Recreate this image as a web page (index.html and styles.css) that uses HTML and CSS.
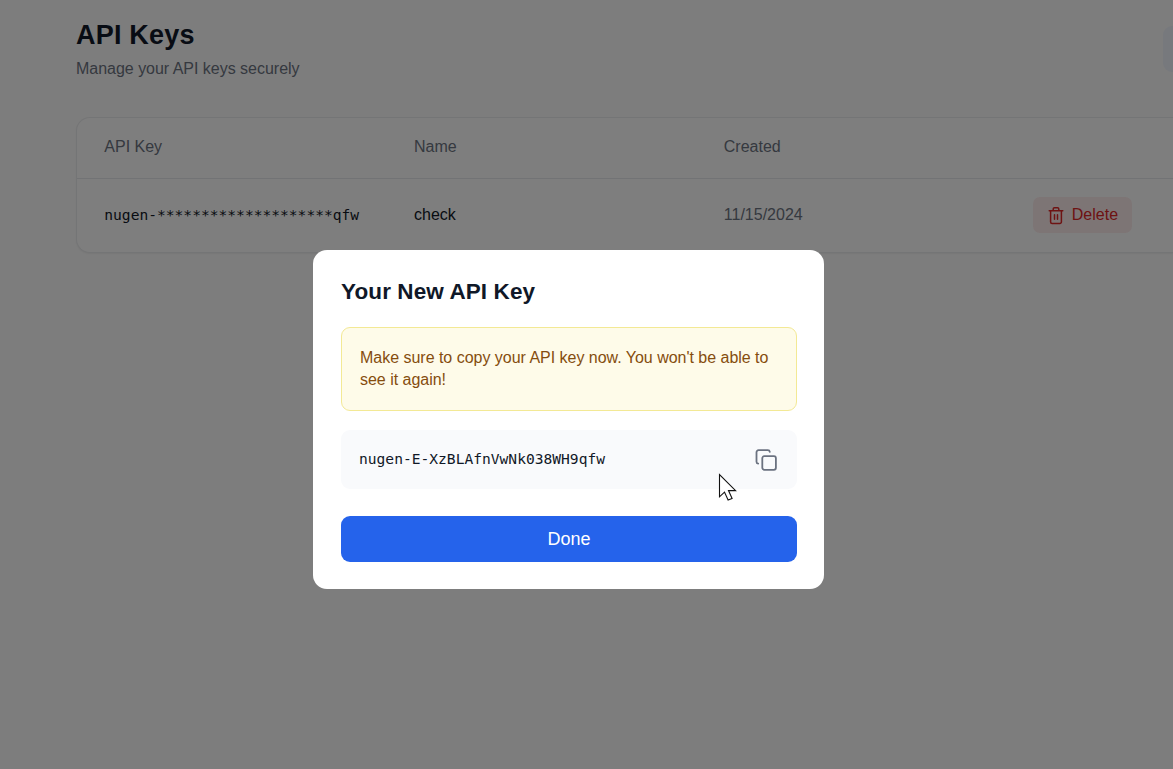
FILE: index.html
```html
<!DOCTYPE html>
<html lang="en">
<head>
<meta charset="utf-8">
<title>API Keys</title>
<link rel="stylesheet" href="styles.css">
</head>
<body>
<main class="page">
  <header class="page-header">
    <div>
      <h1 class="page-title">API Keys</h1>
      <p class="page-subtitle">Manage your API keys securely</p>
    </div>
    <div class="create-button"></div>
  </header>
  <section class="card">
    <div class="row row-head">
      <span>API Key</span><span>Name</span><span>Created</span><span></span>
    </div>
    <div class="row row-body">
      <span class="mono">nugen-********************qfw</span>
      <span class="name">check</span>
      <span class="date">11/15/2024</span>
      <button class="delete">
        <svg class="trash" viewBox="0 0 18 20" fill="none" stroke="currentColor" stroke-width="1.5" stroke-linecap="round" stroke-linejoin="round"><path d="M2.2 5.7h13.6M3.6 5.7v11.3a1.5 1.5 0 0 0 1.5 1.5h7.8a1.5 1.5 0 0 0 1.5-1.5V5.7M6.2 5.7V4.1A1.3 1.3 0 0 1 7.5 2.8h3A1.3 1.3 0 0 1 11.8 4.1v1.6M7.5 9.7v4.6M10.5 9.7v4.6"/></svg>
        <span class="delete-label">Delete</span>
      </button>
    </div>
  </section>
</main>
<div class="overlay">
  <div class="modal">
    <h2 class="modal-title">Your New API Key</h2>
    <p class="notice">Make sure to copy your API key now. You won't be able to<br>see it again!</p>
    <div class="key-box">
      <code class="mono">nugen-E-XzBLAfnVwNk038WH9qfw</code>
      <svg class="copy" viewBox="0 0 22 22" fill="none" stroke="currentColor" stroke-width="1.8" stroke-linecap="round" stroke-linejoin="round"><rect x="7.3" y="7.2" width="13.6" height="13.6" rx="2"/><path d="M3.2 14.6a2 2 0 0 1-1.7-2V3.2a2 2 0 0 1 2-2h9.3a2 2 0 0 1 2 1.7"/></svg>
    </div>
    <button class="done">Done</button>
  </div>
</div>
<svg class="cursor" viewBox="0 0 20 29"><path d="M1.5 1.5v22.3l5-4.7 3.6 8 4-1.7-3.6-7.8h7.1z" fill="#fff" stroke="#111" stroke-width="1.1"/></svg>
</body>
</html>
```
FILE: styles.css
```css
* { box-sizing: border-box; margin: 0; }
body {
  height: 769px;
  overflow: hidden;
  background: #fbfbfb;
  font: 16px/22px "Liberation Sans", Arial, sans-serif;
}
button { border: 0; font: inherit; }
.page { padding: 18px 0 0 76px; }
.page-header { display: flex; justify-content: space-between; height: 99px; }
.page-title { font-size: 27px; line-height: 34px; color: #101828; letter-spacing: .2px; }
.page-subtitle { margin-top: 6px; color: #6b7280; letter-spacing: -.02px; }
.create-button { width: 10px; height: 46px; margin-top: 8px; border-radius: 9px 0 0 9px; background: #eef2fb; }
.card {
  height: 136px;
  border: 1px solid #e9eaec;
  border-right: 0;
  border-radius: 14px 0 0 14px;
  background: #fdfdfd;
  box-shadow: 0 1px 2px rgba(0, 0, 0, .06);
}
.row { display: grid; grid-template-columns: 309.75px 309.75px 309.2px 1fr; align-items: center; padding-left: 27.3px; }
.row-head { height: 61px; padding-bottom: 2px; border-bottom: 1px solid #e5e7eb; color: #6b7280; }
.row-body { height: 73px; padding-bottom: 2px; }
.mono { font: 14.6px/20px "DejaVu Sans Mono", monospace; color: #111827; white-space: nowrap; }
.name { color: #111827; }
.date { color: #6b7280; }
.delete {
  display: flex;
  align-items: center;
  gap: 6.8px;
  justify-self: start;
  width: 99px;
  height: 36px;
  padding: 0 0 0 14px;
  border-radius: 7px;
  background: #fbeaea;
  color: #dc2626;
}
.delete-label { line-height: 22px; }
.trash { width: 18px; height: 20px; }
.overlay {
  position: absolute;
  inset: 0;
  padding: 250px 0 0 313px;
  background: rgba(0, 0, 0, .5);
}
.modal {
  width: 511px;
  height: 339px;
  padding: 28px 27px 27px 28px;
  border-radius: 14px;
  background: #fff;
}
.modal-title { font-size: 22.5px; line-height: 28px; color: #101828; letter-spacing: .1px; }
.notice {
  height: 84px;
  margin-top: 21px;
  padding: 19px 18px;
  border: 1px solid #f3e995;
  border-radius: 9px;
  background: #fefbe9;
  color: #854d0e;
  letter-spacing: -.02px;
}
.key-box {
  display: flex;
  align-items: center;
  justify-content: space-between;
  height: 59px;
  margin-top: 19px;
  padding: 0 20px 0 18px;
  border-radius: 9px;
  background: #f9fafc;
}
.key-box .mono { padding-bottom: 2px; }
.copy { width: 22px; height: 22px; color: #6b7280; }
.done {
  width: 100%;
  height: 46px;
  margin-top: 27px;
  border-radius: 9px;
  background: #2563eb;
  color: #fff;
  font-size: 18px;
}
.cursor { position: absolute; left: 718px; top: 473px; width: 20px; height: 29px; }
```
